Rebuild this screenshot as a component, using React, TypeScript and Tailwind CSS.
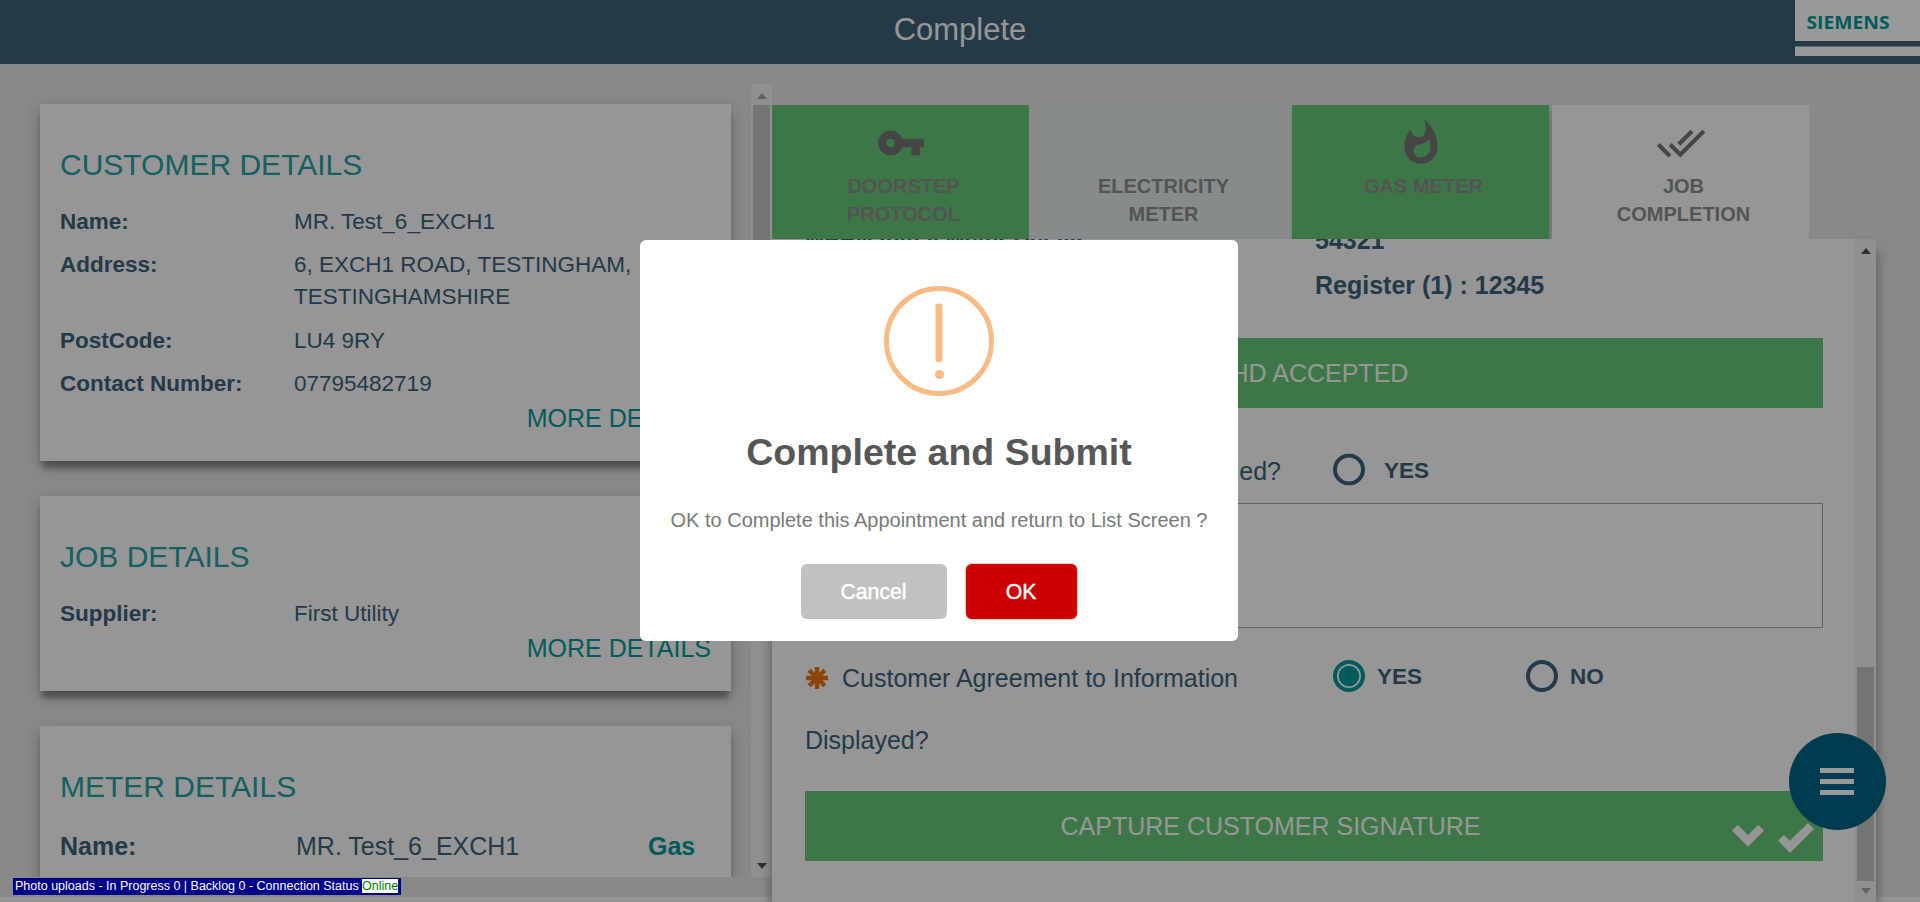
import React from "react";
import { MdDoneAll, MdVpnKey, MdWhatshot } from "react-icons/md";

const cardShadow =
  "shadow-[0_9px_6px_-2px_rgba(0,0,0,0.32),0_5px_15px_0_rgba(0,0,0,0.22)]";

function Card({ title, height, children }: { title: string; height: string; children: React.ReactNode }) {
  return (
    <section className={`${height} ${cardShadow} w-[691px] shrink-0 bg-[#fafafa] pl-5 pr-[20px] pt-[41px]`}>
      <h2 className="mb-[21px] text-[30px] leading-[40px] text-[#23a0a0]">{title}</h2>
      {children}
    </section>
  );
}

function Row({ label, children }: { label: string; children: React.ReactNode }) {
  return (
    <div className="mb-[11.3px] flex text-[22.5px] leading-[32px]">
      <dt className="w-[234px] shrink-0 font-bold">{label}</dt>
      <dd className="w-[360px]">{children}</dd>
    </div>
  );
}

function More() {
  return (
    <div className="-mt-[9px] text-right text-[25px] leading-[32px] text-[#009999]">MORE DETAILS</div>
  );
}

function Arrow({ up, dim }: { up?: boolean; dim?: boolean }) {
  return (
    <svg width="10" height="6" viewBox="0 0 10 6" className={dim ? "text-[#a0a0a0]" : "text-[#505050]"}>
      <path d={up ? "M0 6L5 0L10 6Z" : "M0 0L5 6L10 0Z"} fill="currentColor" />
    </svg>
  );
}

function Radio({ checked }: { checked?: boolean }) {
  return (
    <svg width="32" height="32" viewBox="0 0 32 32" className="shrink-0">
      <circle cx="16" cy="16" r="14" fill="none" strokeWidth="4" stroke={checked ? "#009999" : "#3c6178"} />
      {checked && <circle cx="16" cy="16" r="10.3" fill="#009999" />}
    </svg>
  );
}

function Tab({ color, icon, children }: { color: string; icon?: React.ReactNode; children: React.ReactNode }) {
  return (
    <div className={`${color} flex h-[134px] w-[257px] flex-col items-center pt-[13px]`}>
      <div className="h-[54px] text-[50px] text-[#747474]">{icon}</div>
      <div className="pl-[6px] text-center text-[20px] font-bold leading-[28px] text-[#8c8c8c]">{children}</div>
    </div>
  );
}

export default function App() {
  return (
    <div className="relative h-[902px] w-[1920px] overflow-hidden bg-[#fafafa] font-['Liberation_Sans',Arial,sans-serif] text-[#3c6178]">
      <header className="flex h-16 justify-between bg-[#3e6176]">
        <div className="w-[125px]" />
        <h1 className="pt-[11px] text-[31px] leading-[37px] text-[#fafafa]">Complete</h1>
        <svg width="125" height="56" viewBox="0 0 125 56">
          <rect width="125" height="56" fill="#ffffff" />
          <rect y="41" width="125" height="5.5" fill="#3e6176" />
          <text x="11.5" y="28.5" textLength="83" lengthAdjust="spacingAndGlyphs" fontFamily="'Open Sans', sans-serif" fontWeight="700" fontSize="18" fill="#009999">SIEMENS</text>
        </svg>
      </header>

      <main className="flex h-[833px] items-start bg-[#e4e4e4]">
        <div className="mt-5 flex h-[793px] w-[772px] shrink-0 overflow-hidden">
          <div className="flex w-[751px] flex-col gap-[35px] overflow-hidden pl-10 pt-5">
            <Card title="CUSTOMER DETAILS" height="h-[357px]">
              <dl>
                <Row label="Name:">MR. Test_6_EXCH1</Row>
                <Row label="Address:">6, EXCH1 ROAD, TESTINGHAM, TESTINGHAMSHIRE</Row>
                <Row label="PostCode:">LU4 9RY</Row>
                <Row label="Contact Number:">07795482719</Row>
              </dl>
              <More />
            </Card>
            <Card title="JOB DETAILS" height="h-[195px]">
              <dl>
                <Row label="Supplier:">First Utility</Row>
              </dl>
              <More />
            </Card>
            <Card title="METER DETAILS" height="h-[300px]">
              <div className="flex pt-[2px] text-[25px] leading-[32px]">
                <span className="w-[236px] font-bold">Name:</span>
                <span className="w-[352px]">MR. Test_6_EXCH1</span>
                <span className="font-bold text-[#009999]">Gas</span>
              </div>
            </Card>
          </div>
          <div className="flex w-[21px] flex-col items-center bg-[#f1f1f1]">
            <div className="flex h-[21px] items-center pt-[2px]"><Arrow up dim /></div>
            <div className="h-[430px] w-[17px] bg-[#c1c1c1]" />
            <div className="mt-auto flex h-[23px] items-center"><Arrow /></div>
          </div>
        </div>

        <div className="mt-[41px] w-[1104px] shrink-0">
          <nav className="flex gap-[3px]">
            <Tab color="bg-[#67c678]" icon={<MdVpnKey />}>DOORSTEP<br />PROTOCOL</Tab>
            <Tab color="bg-[#e0e8e8]">ELECTRICITY<br />METER</Tab>
            <Tab color="bg-[#67c678] shadow-[3px_5px_6px_0_rgba(0,0,0,0.2)]" icon={<MdWhatshot />}>GAS METER</Tab>
            <Tab color="bg-[#fafafa]" icon={<MdDoneAll />}>JOB<br />COMPLETION</Tab>
          </nav>
          <div className="relative flex h-[663px] bg-[#fafafa] shadow-[0_12px_12px_0_rgba(0,0,0,0.4)]">
            <div className="w-[1083px] pl-[33px] pr-[32px]">
              <div className="flex h-[99px] overflow-hidden text-[25px] font-bold">
                <div className="w-[510px] shrink-0">
                  <p className="-mt-[15px] text-[23px] leading-[32px]">MPRN Initial Meter Details :</p>
                </div>
                <div>
                  <p className="-mt-[15px] leading-[32px]">54321</p>
                  <p className="mt-[13px] leading-[32px]">Register (1) : 12345</p>
                </div>
              </div>
              <div className="flex h-[70px] items-center justify-center bg-[#67c678] pl-[4px] pt-[2px] text-[25px] text-[#fafafa]">IHD ACCEPTED</div>
              <div className="flex h-[95px] items-center pt-[29px]">
                <span className="w-[476px] pt-[3px] text-right text-[25px]">ied?</span>
                <span className="ml-[52px] -translate-y-[0.5px]"><Radio /></span>
                <span className="ml-[19px] pt-[2px] text-[22.5px] font-bold">YES</span>
              </div>
              <div className="h-[125px] border border-[#a6a6a6] bg-white" />
              <div className="flex h-[163px] pt-[19px]">
                <p className="w-[528px] text-[25px] leading-[62px]">
                  <svg width="22" height="22" viewBox="0 0 22 22" className="mr-[14px] ml-[1px] inline-block -translate-y-[2px] align-middle">
                    <path d="M11 0V22M0 11H22M3.2 3.2L18.8 18.8M18.8 3.2L3.2 18.8" stroke="#e8730f" strokeWidth="4.4" />
                  </svg>
                  Customer Agreement to Information Displayed?
                </p>
                <div className="flex h-[58px] items-center text-[22.5px] font-bold">
                  <Radio checked />
                  <span className="ml-[12px] w-[149px] pt-[2px]">YES</span>
                  <Radio />
                  <span className="ml-[12px] pt-[2px]">NO</span>
                </div>
              </div>
              <div className="relative flex h-[70px] items-center justify-center bg-[#67c678] pt-[2px] text-[25px] text-[#fafafa]">
                <span className="pr-[87px]">CAPTURE CUSTOMER SIGNATURE</span>
                <svg width="84" height="32" viewBox="0 0 84 32" fill="#fafafa" className="absolute right-[7px] top-[31px]">
                  <path d="M0 8.5L5.8 3L16 13L26.3 3L32 8.5L16 24.7Z" />
                  <path d="M46 18.5L52 13L58 18.5L76 1L82 7L58 31Z" />
                </svg>
              </div>
            </div>
            <div className="flex w-[21px] flex-col items-center bg-[#f1f1f1]">
              <div className="flex h-[23px] items-center"><Arrow up /></div>
              <div className="mt-[405px] h-[214px] w-[17px] bg-[#c1c1c1]" />
              <div className="flex h-[20px] items-center"><Arrow dim /></div>
            </div>
          </div>
        </div>
      </main>

      <button className="absolute left-[1788.5px] top-[732.5px] flex h-[97px] w-[97px] flex-col items-center justify-center gap-[6px] rounded-full bg-[#006487]">
        <span className="h-[5px] w-[34px] bg-white" />
        <span className="h-[5px] w-[34px] bg-white" />
        <span className="h-[5px] w-[34px] bg-white" />
      </button>

      <div className="absolute inset-0 bg-black/40" />

      <div className="absolute left-[640px] top-[240px] flex h-[401px] w-[598px] flex-col items-center rounded-[6px] bg-white pt-[46px]">
        <svg width="110" height="110" viewBox="0 0 110 110">
          <circle cx="55" cy="55" r="52.5" fill="none" stroke="#f8bb86" strokeWidth="5" />
          <rect x="51.5" y="17.5" width="7" height="58.5" rx="2.5" fill="#f8bb86" />
          <circle cx="55.5" cy="88.5" r="4.6" fill="#f8bb86" />
        </svg>
        <h2 className="mt-[31px] text-[37.5px] font-bold leading-[50px] text-[#575757]">Complete and Submit</h2>
        <p className="mt-[29px] text-[20px] leading-[28px] text-[#797979]">OK to Complete this Appointment and return to List Screen ?</p>
        <div className="mt-[30px] flex gap-[19px] pr-[1px]">
          <button className="h-[55px] w-[146px] rounded-[6px] bg-[#c1c1c1] pt-[3px] text-[21.25px] text-white [-webkit-text-stroke:0.4px_white]">Cancel</button>
          <button className="h-[55px] w-[111px] rounded-[6px] bg-[#cc0000] pt-[3px] text-[21.25px] text-white shadow-[0_0_2px_rgba(204,0,0,0.8)] [-webkit-text-stroke:0.4px_white]">OK</button>
        </div>
      </div>

      <div className="absolute left-[13px] top-[878px] flex h-[17px] w-[388px] whitespace-nowrap bg-[#00008b] pl-[2px] pt-[1px] text-[12.5px] leading-[14px] text-white">
        <span className="w-[347px]">Photo uploads - In Progress 0 | Backlog 0 - Connection Status</span>
        <span className="h-[14px] w-[36px] bg-white text-[#008000]">Online</span>
      </div>
    </div>
  );
}
